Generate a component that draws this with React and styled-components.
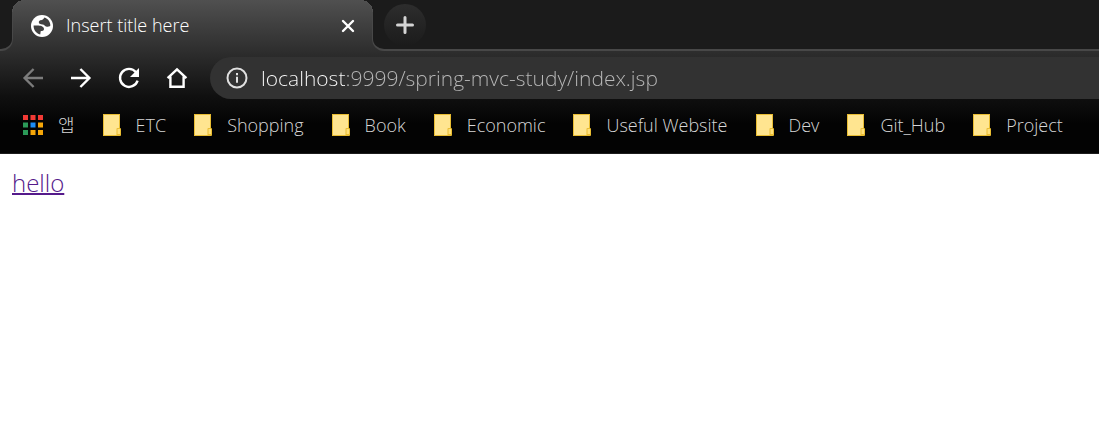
import React from "react";
import styled, { createGlobalStyle } from "styled-components";

const GlobalStyle = createGlobalStyle`
  * { box-sizing: border-box; }
  body { margin: 0; background: #fff; font-family: "Open Sans", "Noto Sans CJK KR", sans-serif; font-weight: 300; }
`;

const BrowserFrame = styled.header`
  background: linear-gradient(#505050 0, #303030 48px, #101010 96px, #030303 124px, #030303 100%);
  border-bottom: 1px solid #1c1c1c;
  overflow: hidden;
`;

const TabStrip = styled.div`
  display: flex;
  height: 51px;
`;

const StripEdge = styled.div`
  background: #1b1b1b;
  border: 0 solid #484848;
  border-bottom-width: 2px;
`;

const LeadingEdge = styled(StripEdge)`
  width: 13px;
  border-right-width: 1px;
  border-bottom-right-radius: 12px;
`;

const TrailingEdge = styled(StripEdge)`
  flex: 1;
  padding: 4px 11px;
  border-left-width: 1px;
  border-bottom-left-radius: 12px;
`;

const Tab = styled.div`
  position: relative;
  display: flex;
  align-items: center;
  width: 359px;
  padding: 0 16px 0 18px;
  color: #fff;

  &::before,
  &::after {
    content: "";
    position: absolute;
    top: 0;
    width: 12px;
    height: 12px;
  }
  &::before {
    left: -1px;
    background: radial-gradient(circle at 100% 100%, transparent 11px, #515151 11px 12px, #1b1b1b 12px);
  }
  &::after {
    right: -1px;
    background: radial-gradient(circle at 0 100%, transparent 11px, #515151 11px 12px, #1b1b1b 12px);
  }
`;

const TabTitle = styled.span`
  flex: 1;
  margin-left: 13px;
  padding-bottom: 2px;
  font-size: 18px;
  line-height: 24px;
`;

const IconButton = styled.button`
  display: flex;
  align-items: center;
  justify-content: center;
  width: ${(p) => p.$size}px;
  height: ${(p) => p.$size}px;
  padding: 0;
  border: 0;
  border-radius: 50%;
  background: none;
  color: ${(p) => (p.disabled ? "#7c7c7c" : "#fff")};
`;

const NewTabButton = styled(IconButton)`
  background: linear-gradient(#2d2d2d, #1b1b1b);
  color: #d4d4d4;
`;

const Toolbar = styled.nav`
  display: flex;
  align-items: center;
  gap: 16px;
  padding: 6px 0 0 17px;
`;

const AddressBar = styled.label`
  display: flex;
  align-items: center;
  flex: 1;
  gap: 13px;
  height: 42px;
  margin-left: 1px;
  padding-left: 16px;
  border-radius: 21px 0 0 21px;
  background: #323232;
  color: #e0e0e0;
`;

const AddressInput = styled.input`
  flex: 1;
  min-width: 0;
  height: 32px;
  padding: 0;
  border: 0;
  outline: 0;
  font: 300 21px/32px "Open Sans", sans-serif;
  color: transparent;
  background: linear-gradient(90deg, #fff 85px, #bababa 85px);
  background-clip: text;
`;

const BookmarkBar = styled.nav`
  display: flex;
  align-items: center;
  gap: 28px;
  height: 54px;
  padding: 0 21px 2px;
`;

const Bookmark = styled.a`
  display: flex;
  align-items: center;
  gap: 15px;
  color: #d6d6d6;
  font-size: 18px;
  line-height: 26px;
  text-decoration: none;
  white-space: nowrap;
`;

const Page = styled.main`
  padding: 13px 12px;
`;

const HelloLink = styled.a`
  color: #551a8b;
  font-size: 24px;
  line-height: 32px;
  text-decoration-thickness: 2px;
`;

function Icon({ size = 24, children, ...rest }) {
  return (
    <svg width={size} height={size} viewBox={`0 0 ${size} ${size}`} fill="none" stroke="currentColor"
      strokeWidth="2.4" aria-hidden="true" {...rest}>
      {children}
    </svg>
  );
}

const GlobeIcon = () => (
  <Icon size={22} stroke="none">
    <circle cx="11" cy="11" r="11" fill="#fff" />
    <path fill="#404040" d="M13.4 2.6 C17 3.8 19.4 7 19.4 10.6 C18.4 12 16.4 12 15 11.4 C13.4 10.8 13.4 9.6 11.6 9.4 C9.4 9.4 7.6 8.8 7.8 7 C8 5 10.6 5.2 11.8 4.4 C12.6 3.8 13 3.2 13.4 2.6 Z" />
    <path fill="#404040" d="M2.6 10.4 H7.6 C11 10.6 13.2 12 13 14.2 C12.8 15.8 11.2 15.8 9.8 16 C9.4 17.2 9.6 18.4 9.2 19.4 C5.2 18.4 2.4 14.8 2.6 10.4 Z" />
  </Icon>
);

const AppsIcon = () => {
  const colors = ["#f23a35", "#f23a35", "#f23a35", "#2b9a58", "#1b8cf5", "#f5a608", "#2b9a58", "#f5a608", "#f5a608"];
  return (
    <Icon size={22} stroke="none">
      {colors.map((c, i) => (
        <rect key={i} x={2 + (i % 3) * 7.5} y={1 + Math.floor(i / 3) * 7.5} width="5" height="5" fill={c} />
      ))}
    </Icon>
  );
};

const FolderIcon = () => (
  <svg width="18" height="22" viewBox="0 0 18 22" aria-hidden="true">
    <rect x="0" y="0" width="17" height="22" fill="#e9bd32" />
    <rect x="1" y="1" width="15" height="20" fill="#ffe590" />
    <rect x="13.5" y="14" width="4.5" height="8" rx="1" fill="#e9bd32" />
    <rect x="14.5" y="15" width="2.5" height="5" fill="#ffe07a" />
  </svg>
);

const bookmarks = ["ETC", "Shopping", "Book", "Economic", "Useful Website", "Dev", "Git_Hub", "Project"];

export default function App() {
  return (
    <>
      <GlobalStyle />
      <BrowserFrame>
        <TabStrip>
          <LeadingEdge />
          <Tab>
            <GlobeIcon />
            <TabTitle>Insert title here</TabTitle>
            <IconButton $size={16} aria-label="Close tab">
              <Icon size={16} strokeLinecap="round"><path d="M3 3l10 10M13 3L3 13" /></Icon>
            </IconButton>
          </Tab>
          <TrailingEdge>
            <NewTabButton $size={42} aria-label="New tab">
              <Icon size={20} strokeWidth="3" strokeLinecap="round"><path d="M10 2.5v15M2.5 10h15" /></Icon>
            </NewTabButton>
          </TrailingEdge>
        </TabStrip>
        <Toolbar>
          <IconButton $size={32} disabled aria-label="Back">
            <Icon><path d="M22 12H4M12.6 3L3.6 12l9 9" /></Icon>
          </IconButton>
          <IconButton $size={32} aria-label="Forward">
            <Icon><path d="M2 12h18M11.4 3l9 9-9 9" /></Icon>
          </IconButton>
          <IconButton $size={32} aria-label="Reload">
            <Icon>
              <path d="M19 6.2A9 9 0 1 0 20.6 14.6" />
              <path d="M22 2v9h-9z" fill="currentColor" stroke="none" />
            </Icon>
          </IconButton>
          <IconButton $size={32} aria-label="Home">
            <Icon><path d="M2.6 12.2L12 3.4l9.4 8.8M5.4 10.5V20.8h13.2V10.5" /></Icon>
          </IconButton>
          <AddressBar>
            <Icon size={22} strokeWidth="2">
              <circle cx="11" cy="11" r="9.5" />
              <path d="M11 9.8v6M11 6v2.2" />
            </Icon>
            <AddressInput aria-label="Address" defaultValue="localhost:9999/spring-mvc-study/index.jsp" />
          </AddressBar>
        </Toolbar>
        <BookmarkBar>
          <Bookmark href="#apps"><AppsIcon />앱</Bookmark>
          {bookmarks.map((name) => (
            <Bookmark href={`#${name}`} key={name}><FolderIcon />{name}</Bookmark>
          ))}
        </BookmarkBar>
      </BrowserFrame>
      <Page>
        <HelloLink href="#hello">hello</HelloLink>
      </Page>
    </>
  );
}
